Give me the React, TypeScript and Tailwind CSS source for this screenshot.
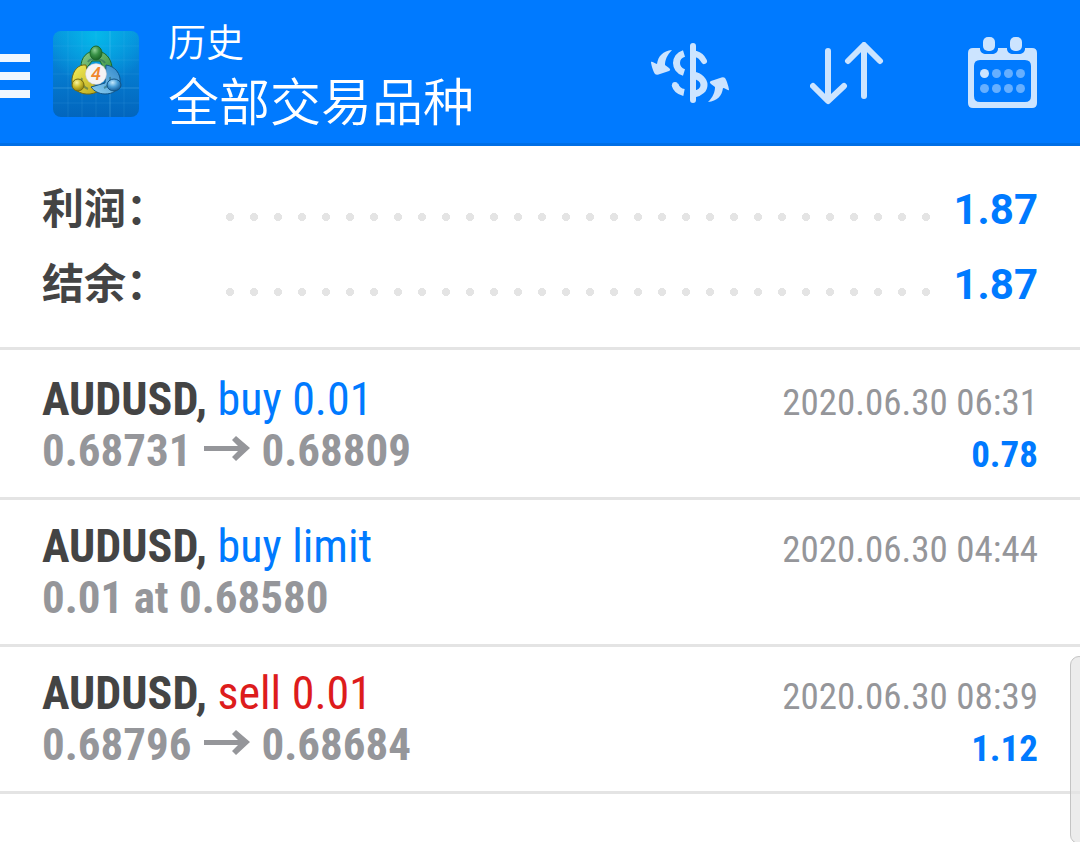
import React from 'react';

const deals = [
  { symbol: 'AUDUSD', action: 'buy 0.01', open: '0.68731', close: '0.68809', time: '2020.06.30 06:31', profit: '0.78' },
  { symbol: 'AUDUSD', action: 'buy limit', note: '0.01 at 0.68580', time: '2020.06.30 04:44' },
  { symbol: 'AUDUSD', action: 'sell 0.01', open: '0.68796', close: '0.68684', time: '2020.06.30 08:39', profit: '1.12' },
];

const totals = [
  { label: '利润：', value: '1.87' },
  { label: '结余：', value: '1.87' },
];

function Logo() {
  return (
    <svg viewBox="0 0 86 86" className="h-[86px] w-[86px] shrink-0" aria-hidden="true">
      <defs>
        <linearGradient id="tile" x1="0" y1="0" x2="0" y2="1">
          <stop offset="0" stopColor="#0790dc" />
          <stop offset="0.5" stopColor="#057bcf" />
          <stop offset="1" stopColor="#0265bd" />
        </linearGradient>
        <radialGradient id="glow" cx="0.5" cy="0.05" r="0.6">
          <stop offset="0" stopColor="#05b8ea" />
          <stop offset="1" stopColor="#05b8ea" stopOpacity="0" />
        </radialGradient>
        <linearGradient id="green" x1="0" y1="0" x2="1" y2="1">
          <stop offset="0" stopColor="#8ccb8c" />
          <stop offset="1" stopColor="#2c8b37" />
        </linearGradient>
        <linearGradient id="yellow" x1="0" y1="0" x2="1" y2="1">
          <stop offset="0" stopColor="#f5ef5a" />
          <stop offset="1" stopColor="#b7a51c" />
        </linearGradient>
        <linearGradient id="blue" x1="1" y1="0" x2="0" y2="1">
          <stop offset="0" stopColor="#2f86c8" />
          <stop offset="1" stopColor="#8ed0f2" />
        </linearGradient>
        <radialGradient id="greenHead" cx="0.4" cy="0.3" r="0.7">
          <stop offset="0" stopColor="#8fd097" />
          <stop offset="0.5" stopColor="#399247" />
          <stop offset="1" stopColor="#1b6428" />
        </radialGradient>
        <radialGradient id="yellowHead" cx="0.4" cy="0.3" r="0.7">
          <stop offset="0" stopColor="#fbf6a0" />
          <stop offset="0.5" stopColor="#cfc031" />
          <stop offset="1" stopColor="#8f8010" />
        </radialGradient>
        <radialGradient id="blueHead" cx="0.4" cy="0.3" r="0.7">
          <stop offset="0" stopColor="#c4e8fb" />
          <stop offset="0.5" stopColor="#4a9fd8" />
          <stop offset="1" stopColor="#155c98" />
        </radialGradient>
      </defs>
      <rect width="86" height="86" rx="8" fill="url(#tile)" />
      <rect width="86" height="86" rx="8" fill="url(#glow)" />
      <path d="M15 0V86M29 0V86M43 0V86M71 0V86M0 15H86M0 29H86M0 43H86M0 72H86" stroke="#5fc0f0" strokeOpacity="0.15" />
      <path d="M57 0V86M0 57H86" stroke="#7fd0f8" strokeOpacity="0.3" />
      <path d="M28 36C28 26 34 20 43 20s15 7 16 16c0 4-1 8-3 12L47 30h-8l-9 12c-2-1-2-4-2-6z" fill="url(#green)" stroke="#1c6a2b" />
      <path d="M33 34c-8-1-13 6-14 14-1 10 8 16 18 15 5-1 9-2 11-5L36 50z" fill="url(#yellow)" stroke="#746a10" />
      <path d="M53 34c9 1 15 9 14 17-1 9-8 12-15 12-6 0-11-3-14-7l14-4z" fill="url(#blue)" stroke="#125486" />
      <path d="M29 47c-2 4 1 9 6 11M57 46c1 5-1 9-6 11M35 31c2-4 14-4 17 1" fill="none" stroke="#1f5d5c" strokeOpacity="0.5" strokeWidth="2" />
      <ellipse cx="43" cy="22" rx="6" ry="7" fill="url(#greenHead)" stroke="#1c6a2b" />
      <ellipse cx="25" cy="54" rx="6" ry="6" fill="url(#yellowHead)" stroke="#746a10" />
      <ellipse cx="61" cy="54" rx="7" ry="6" fill="url(#blueHead)" stroke="#125486" />
      <circle cx="43" cy="43" r="10.500" fill="#f4f3f4" stroke="#c4c5c8" strokeWidth="0.500" />
      <text x="43" y="49" textAnchor="middle" fontFamily="Roboto, sans-serif" fontSize="18" fontStyle="italic" fontWeight="500" fill="#f0862c">4</text>
    </svg>
  );
}

function CurrencyIcon() {
  return (
    <svg viewBox="0 0 80 62" className="h-[62px] w-20" fill="none" stroke="#cce4ff" strokeWidth="6" aria-hidden="true">
      <path d="M43 3v54M46 11c4 1 6 3 8 7M25 42l0 0" strokeLinecap="round" />
      <path d="M34 10.500c-10 3-10 16 0 19M34 49.500c-5-1-8-4-9-8M43 32c15 3 14 17 1 19" strokeWidth="7" />
      <g fill="#cce4ff" stroke="none">
        <path d="M22 7C13 8 8 13 7 21c-2 0-5-3-6-2 0 2 2 9 4 12 1 1 3 1 5 0l9-3c2-1 1-2 0-3l-4-3c0-5 2-10 7-15z" />
        <path transform="rotate(180 40 33)" d="M22 7C13 8 8 13 7 21c-2 0-5-3-6-2 0 2 2 9 4 12 1 1 3 1 5 0l9-3c2-1 1-2 0-3l-4-3c0-5 2-10 7-15z" />
      </g>
    </svg>
  );
}

function SortIcon() {
  return (
    <svg viewBox="0 0 78 64" className="h-16 w-[78px]" fill="none" stroke="#cce4ff" strokeWidth="6" strokeLinecap="round" strokeLinejoin="round" aria-hidden="true">
      <path d="M18 9v49M3 44l15 15 16-15M54 54V4M38 19L54 3l16 16" />
    </svg>
  );
}

function CalendarIcon() {
  return (
    <svg viewBox="0 0 70 76" className="h-[76px] w-[70px]" fill="#cce4ff" aria-hidden="true">
      <path
        fillRule="evenodd"
        d="M5 12h7v1c0 3 3 5 6 5h6c3 0 6-2 6-5v-1h9v1c0 3 3 5 6 5h6c3 0 6-2 6-5v-1h7q5 0 5 5v50q0 5-5 5H5q-5 0-5-5V17q0-5 5-5zM12 24q-6 0-6 6v30q0 6 6 6h45q6 0 6-6V30q0-6-6-6z"
      />
      <rect x="15" y="1" width="12" height="14" rx="5" />
      <rect x="42" y="1" width="12" height="14" rx="5" />
      <circle cx="16.500" cy="37.500" r="4.500" />
      <g fill="#66afff">
        <circle cx="28.500" cy="37.500" r="4.500" />
        <circle cx="40.500" cy="37.500" r="4.500" />
        <circle cx="52.500" cy="37.500" r="4.500" />
        <circle cx="16.500" cy="52.500" r="4.500" />
        <circle cx="28.500" cy="52.500" r="4.500" />
        <circle cx="40.500" cy="52.500" r="4.500" />
        <circle cx="52.500" cy="52.500" r="4.500" />
      </g>
    </svg>
  );
}

function Header() {
  return (
    <header className="flex h-[146px] items-center border-b-3 border-[#006fe6] bg-[#007aff] pt-1 pr-[42px] text-white">
      <button aria-label="菜单" className="mr-[23px] flex w-[30px] flex-col gap-[10px] pt-1">
        <span className="h-2 w-full bg-[#f0f7ff]" />
        <span className="h-2 w-full bg-[#f0f7ff]" />
        <span className="h-2 w-full bg-[#f0f7ff]" />
      </button>
      <Logo />
      <div className="ml-[29px] pb-2 font-['Noto_Sans_CJK_SC',sans-serif] font-[350]">
        <p className="text-[38px] leading-[58px]">历史</p>
        <h1 className="text-[51px] leading-[60px]">全部交易品种</h1>
      </div>
      <div className="ml-auto flex items-center gap-20">
        <button aria-label="交易品种"><CurrencyIcon /></button>
        <button aria-label="排序"><SortIcon /></button>
        <button aria-label="日期"><CalendarIcon /></button>
      </div>
    </header>
  );
}

function Arrow() {
  return (
    <svg viewBox="0 0 46 30" className="mx-3 inline-block h-[30px] w-[46px]" aria-label="→">
      <path d="M0 10h34l-6-6 4-4 14 12-14 13-4-4 6-6H0z" fill="#95969a" />
    </svg>
  );
}

export default function App() {
  return (
    <div className="relative min-h-screen overflow-hidden bg-white font-['Roboto_Condensed','Liberation_Sans_Narrow',Roboto,sans-serif]">
      <Header />
      <main>
        <dl className="border-b-3 border-[#e4e4e4] px-[42px] pt-[26px] pb-[25px]">
          {totals.map((row) => (
            <div key={row.label} className="flex h-[75px] items-center text-[42px] font-bold">
              <dt className="w-[184px] pb-2 font-['Noto_Sans_CJK_SC',sans-serif] text-[#444444]">{row.label}</dt>
              <div className="mt-[14px] h-2 max-w-[704px] flex-1 bg-[radial-gradient(circle_at_4px_4px,#e4e4e4_4px,transparent_4px)] bg-[length:24px_8px]" />
              <dd className="ml-auto pl-6 font-[Roboto,sans-serif] text-[#007aff]">{row.value}</dd>
            </div>
          ))}
        </dl>
        <ul className="pt-[3px]">
          {deals.map((deal) => (
            <li key={deal.time} className="flex h-[147px] items-start justify-between border-b-3 border-[#e4e4e4] px-[42px] pt-5 text-[45px] leading-[52px]">
              <div>
                <p className="text-[46px] text-[#444444]">
                  <b>{deal.symbol},</b>{' '}
                  <span className={deal.action.startsWith('sell') ? 'text-[#dd1c1c]' : 'text-[#007aff]'}>{deal.action}</span>
                </p>
                <p className="flex items-center font-bold text-[#95969a]">
                  {deal.note ?? (
                    <>
                      {deal.open}
                      <Arrow />
                      {deal.close}
                    </>
                  )}
                </p>
              </div>
              <div className="pt-1 text-right text-[37px]">
                <p className="text-[#95969a]">{deal.time}</p>
                <p className="font-bold text-[#007aff]">{deal.profit}</p>
              </div>
            </li>
          ))}
        </ul>
      </main>
      <div className="absolute top-[656px] -right-2 h-[188px] w-[18px] rounded-xl border border-[#c4c4c4] bg-[#e4e4e4]/70" />
    </div>
  );
}
